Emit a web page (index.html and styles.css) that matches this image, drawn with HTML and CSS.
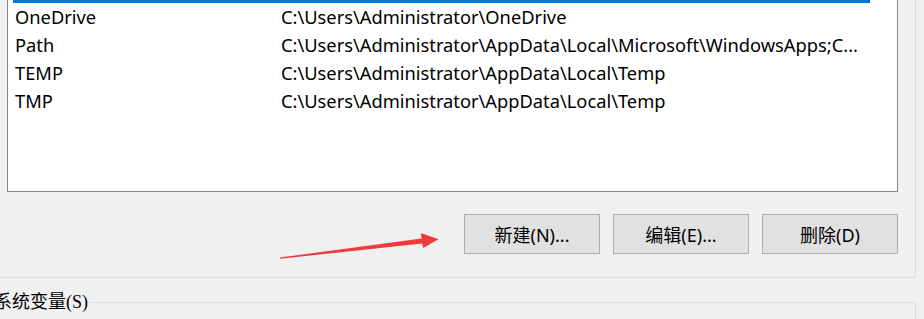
FILE: index.html
```html
<!DOCTYPE html>
<html lang="zh-CN">
<head>
<meta charset="utf-8">
<title>环境变量</title>
<link rel="stylesheet" href="styles.css">
</head>
<body>
<div class="page">
  <div class="group user-group">
    <div class="listbox">
      <div class="row selected"><span>MAVEN_HOME</span><span>D:\apache-maven</span></div>
      <div class="row"><span>OneDrive</span><span>C:\Users\Administrator\OneDrive</span></div>
      <div class="row"><span>Path</span><span>C:\Users\Administrator\AppData\Local\Microsoft\WindowsApps;C...</span></div>
      <div class="row"><span>TEMP</span><span>C:\Users\Administrator\AppData\Local\Temp</span></div>
      <div class="row"><span>TMP</span><span>C:\Users\Administrator\AppData\Local\Temp</span></div>
    </div>
    <div class="buttons">
      <button class="btn">新建(N)...</button>
      <button class="btn">编辑(E)...</button>
      <button class="btn">删除(D)</button>
    </div>
  </div>
  <fieldset class="sys-group">
    <legend class="legend">系统变量(S)</legend>
  </fieldset>
  <svg class="arrow" width="175" height="40" viewBox="270 225 175 40" aria-hidden="true">
    <polygon points="280,257.5 421.6,238.6 420.8,233 438.5,239.2 423.2,248 422.2,243.4 280,258.8" fill="#ef3b3b"/>
  </svg>
</div>
</body>
</html>
```
FILE: styles.css
```css
html, body {
  margin: 0;
  padding: 0;
  background: #f0f0f0;
  overflow: hidden;
}

.page {
  position: relative;
  width: 924px;
  height: 319px;
  overflow: hidden;
  font-family: "Noto Sans", "Noto Sans CJK SC", sans-serif;
  font-size: 18.3px;
  color: #000;
}

.group {
  box-sizing: border-box;
  border: 1px solid #dcdcdc;
}

.user-group {
  margin: -47px 0 0 -10px;
  width: 926px;
  padding: 20px 17px 23px 16px;
}

.listbox {
  box-sizing: border-box;
  height: 218px;
  border: 1px solid #828790;
  background: #fff;
}

.row {
  box-sizing: border-box;
  margin-left: 5px;
  width: 857px;
  height: 28px;
  padding-left: 2px;
  display: grid;
  grid-template-columns: 266px 1fr;
  align-items: center;
  line-height: 28px;
  white-space: nowrap;
}

.row.selected {
  background: #0078d7;
  color: #fff;
}

.buttons {
  display: flex;
  justify-content: flex-end;
  gap: 13px;
  margin-top: 22px;
}

.btn {
  box-sizing: border-box;
  width: 136px;
  height: 40px;
  margin: 0;
  padding: 0;
  border: 1px solid #adadad;
  background: #e1e1e1;
  font-family: "Noto Sans", "Noto Sans CJK SC", sans-serif;
  font-size: 18px;
  color: #000;
}

.sys-group {
  box-sizing: border-box;
  margin: 13px 0 0 -10px;
  width: 926px;
  height: 80px;
  padding: 0;
  border: 1px solid #dcdcdc;
}

.legend {
  margin-left: 3px;
  padding: 0 1px 0 0;
  font-family: "Liberation Serif", "Noto Sans CJK SC", serif;
  font-size: 18px;
  line-height: 22px;
  color: #000;
}

.arrow {
  position: absolute;
  left: 270px;
  top: 225px;
}
```
